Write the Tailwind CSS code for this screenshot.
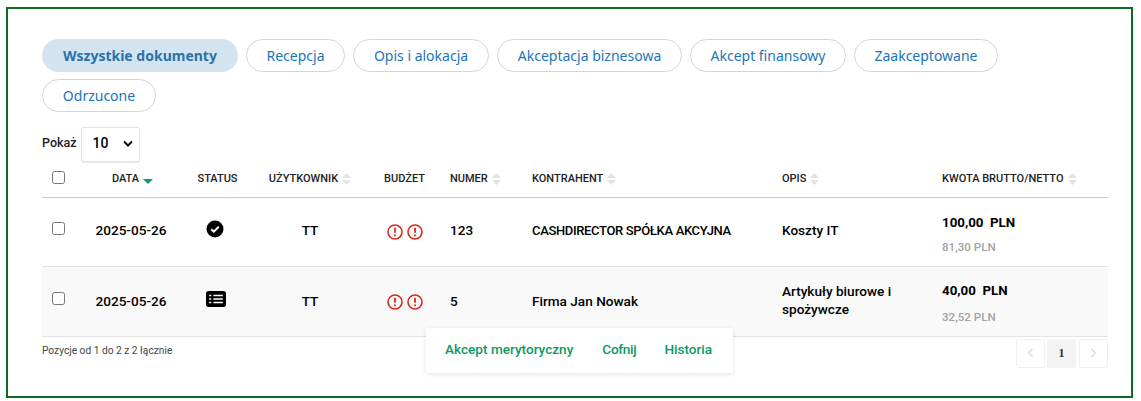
<!DOCTYPE html>
<html lang="pl">

<head>
    <meta charset="UTF-8">
    <title>Dokumenty</title>
    <script src="https://cdn.jsdelivr.net/npm/@tailwindcss/browser@4"></script>
</head>

<body class="bg-white font-['Roboto',sans-serif]">
    <div class="relative mx-[6px] mt-[7px] h-[391px] w-[1127px] border-2 border-[#0b6b23] px-[34px] pt-[30px]">
        <!-- Tabs -->
        <div class="flex flex-wrap gap-x-2 gap-y-[7px] font-['Noto_Sans',sans-serif] text-[14px] text-[#1b75bb]">
            <a class="flex h-[33px] w-[196px] items-center justify-center rounded-full bg-[#d3e4f0] font-bold text-[#2a72a8]">Wszystkie dokumenty</a>
            <a class="flex h-[33px] w-[99px] items-center justify-center rounded-full border border-[#d5d5d5]">Recepcja</a>
            <a class="flex h-[33px] w-[136px] items-center justify-center rounded-full border border-[#d5d5d5]">Opis i alokacja</a>
            <a class="flex h-[33px] w-[185px] items-center justify-center rounded-full border border-[#d5d5d5]">Akceptacja biznesowa</a>
            <a class="flex h-[33px] w-[156px] items-center justify-center rounded-full border border-[#d5d5d5]">Akcept finansowy</a>
            <a class="flex h-[33px] w-[144px] items-center justify-center rounded-full border border-[#d5d5d5]">Zaakceptowane</a>
            <a class="flex h-[33px] w-[114px] items-center justify-center rounded-full border border-[#d5d5d5]">Odrzucone</a>
        </div>

        <!-- Page size -->
        <div class="mt-[15px] flex h-[35px] items-center gap-[4px] text-[12.5px] font-medium text-[#222]">
            <span class="pb-[3px]">Pokaż</span>
            <div class="flex h-[35px] w-[59px] items-center justify-between rounded-[2px] border border-[#e3e3e3] pb-[3px] pl-[11px] pr-[6px] text-[14px] text-black shadow-[0_1px_1px_rgba(0,0,0,0.08)]">
                <span>10</span>
                <svg width="10" height="7" viewBox="0 0 10 7" fill="none" stroke="#111" stroke-width="2"><path d="M1 1.5l4 4 4-4" /></svg>
            </div>
        </div>

        <!-- Table -->
        <table class="w-[1066px] table-fixed border-collapse text-[13.6px] font-medium text-black">
            <colgroup>
                <col class="w-[44px]"><col class="w-[90px]"><col class="w-[83px]"><col class="w-[102px]"><col class="w-[79px]"><col class="w-[82px]"><col class="w-[250px]"><col class="w-[160px]"><col class="w-[176px]">
            </colgroup>
            <thead>
                <tr class="h-[35px] border-b border-[#c8c8c8] text-[11px] font-medium text-[#222]">
                    <th class="pl-[10px] text-left font-medium"><input type="checkbox" class="-mt-[4px] block h-[13px] w-[13px]"></th>
                    <th class="pl-[3px] font-medium"><span class="inline-flex items-center gap-1">DATA <svg width="10" height="12" viewBox="0 0 10 12"><path d="M0 6h10l-5 5z" fill="#0a9a63" /></svg></span></th>
                    <th class="font-medium">STATUS</th>
                    <th class="font-medium"><span class="inline-flex items-center gap-1">UŻYTKOWNIK <svg width="9" height="12" viewBox="0 0 9 12" fill="#e3e3e3"><path d="M0 5l4.5-5L9 5zM0 7l4.5 5L9 7z" /></svg></span></th>
                    <th class="pl-[8px] font-medium">BUDŻET</th>
                    <th class="pl-[10px] text-left font-medium"><span class="inline-flex items-center gap-1">NUMER <svg width="9" height="12" viewBox="0 0 9 12" fill="#e3e3e3"><path d="M0 5l4.5-5L9 5zM0 7l4.5 5L9 7z" /></svg></span></th>
                    <th class="pl-[10px] text-left font-medium"><span class="inline-flex items-center gap-1">KONTRAHENT <svg width="9" height="12" viewBox="0 0 9 12" fill="#e3e3e3"><path d="M0 5l4.5-5L9 5zM0 7l4.5 5L9 7z" /></svg></span></th>
                    <th class="pl-[10px] text-left font-medium"><span class="inline-flex items-center gap-1">OPIS <svg width="9" height="12" viewBox="0 0 9 12" fill="#e3e3e3"><path d="M0 5l4.5-5L9 5zM0 7l4.5 5L9 7z" /></svg></span></th>
                    <th class="pl-[10px] text-left font-medium"><span class="inline-flex items-center gap-1">KWOTA BRUTTO/NETTO <svg width="9" height="12" viewBox="0 0 9 12" fill="#e3e3e3"><path d="M0 5l4.5-5L9 5zM0 7l4.5 5L9 7z" /></svg></span></th>
                </tr>
            </thead>
            <tbody>
                <tr class="h-[69px] border-b border-[#e3e3e3]">
                    <td class="pl-[10px]"><input type="checkbox" class="-mt-[6px] block h-[13px] w-[13px]"></td>
                    <td class="pb-[2px] text-center">2025-05-26</td>
                    <td class="pr-[6px]">
                        <svg class="mx-auto -mt-[5px]" width="18" height="18" viewBox="0 0 18 18"><circle cx="9" cy="9" r="8.5" fill="#000" /><path d="M5.3 9.3l2.5 2.4 4.9-4.9" fill="none" stroke="#fff" stroke-width="2" /></svg>
                    </td>
                    <td class="pb-[2px] text-center">TT</td>
                    <td class="pl-[8px]">
                        <div class="flex justify-center gap-[4px] pt-[1px]">
                            <svg width="16" height="16" viewBox="0 0 16 16"><circle cx="8" cy="8" r="7" fill="none" stroke="#d9281e" stroke-width="1.6" /><path d="M8 3.8v5" stroke="#d9281e" stroke-width="1.8" /><path d="M8 10.4v1.8" stroke="#d9281e" stroke-width="1.8" /></svg>
                            <svg width="16" height="16" viewBox="0 0 16 16"><circle cx="8" cy="8" r="7" fill="none" stroke="#d9281e" stroke-width="1.6" /><path d="M8 3.8v5" stroke="#d9281e" stroke-width="1.8" /><path d="M8 10.4v1.8" stroke="#d9281e" stroke-width="1.8" /></svg>
                        </div>
                    </td>
                    <td class="pb-[2px] pl-[10px]">123</td>
                    <td class="pb-[2px] pl-[10px] text-[13px] tracking-[-0.35px]">CASHDIRECTOR SPÓŁKA AKCYJNA</td>
                    <td class="pb-[2px] pl-[10px]">Koszty IT</td>
                    <td class="pl-[10px] pt-[7px]">
                        <div class="text-[13.3px] font-bold">100,00&nbsp; PLN</div>
                        <div class="mt-[6px] text-[11.6px] text-[#a3a3a3]">81,30 PLN</div>
                    </td>
                </tr>
                <tr class="h-[70px] border-b border-[#e3e3e3] bg-[#f9f9f9]">
                    <td class="pl-[10px]"><input type="checkbox" class="-mt-[6px] block h-[13px] w-[13px]"></td>
                    <td class="text-center">2025-05-26</td>
                    <td class="pr-[4px]">
                        <svg class="mx-auto -mt-[5px]" width="20" height="16" viewBox="0 0 19 16" preserveAspectRatio="none"><rect width="19" height="16" rx="2.5" fill="#000" /><path d="M3 4.5h2M3 8h2M3 11.5h2M7 4.5h9M7 8h9M7 11.5h9" stroke="#fff" stroke-width="1.7" /></svg>
                    </td>
                    <td class="text-center">TT</td>
                    <td class="pl-[8px]">
                        <div class="flex justify-center gap-[4px] pt-[1px]">
                            <svg width="16" height="16" viewBox="0 0 16 16"><circle cx="8" cy="8" r="7" fill="none" stroke="#d9281e" stroke-width="1.6" /><path d="M8 3.8v5" stroke="#d9281e" stroke-width="1.8" /><path d="M8 10.4v1.8" stroke="#d9281e" stroke-width="1.8" /></svg>
                            <svg width="16" height="16" viewBox="0 0 16 16"><circle cx="8" cy="8" r="7" fill="none" stroke="#d9281e" stroke-width="1.6" /><path d="M8 3.8v5" stroke="#d9281e" stroke-width="1.8" /><path d="M8 10.4v1.8" stroke="#d9281e" stroke-width="1.8" /></svg>
                        </div>
                    </td>
                    <td class="pl-[10px]">5</td>
                    <td class="pl-[10px]">Firma Jan Nowak</td>
                    <td class="pb-[2px] pl-[10px] leading-[18px]">Artykuły biurowe i spożywcze</td>
                    <td class="pl-[10px] pt-[6px]">
                        <div class="text-[13.3px] font-bold">40,00&nbsp; PLN</div>
                        <div class="mt-[8px] text-[11.6px] text-[#a3a3a3]">32,52 PLN</div>
                    </td>
                </tr>
            </tbody>
        </table>

        <!-- Footer -->
        <div class="flex w-[1066px] items-start justify-between pt-[2px]">
            <div class="pt-[4px] text-[10.2px] text-[#444]">Pozycje od 1 do 2 z 2 łącznie</div>
            <div class="flex gap-[2px] text-[12px]">
                <span class="flex h-[29px] w-[29px] items-center justify-center rounded-[2px] border border-[#f0f0f0]"><svg width="7" height="10" viewBox="0 0 7 10" fill="none" stroke="#ddd" stroke-width="1.5"><path d="M5.5 1l-4 4 4 4" /></svg></span>
                <span class="flex h-[29px] w-[29px] items-center justify-center rounded-[2px] bg-[#f3f3f3] font-['Liberation_Serif',serif] font-bold text-[#333]">1</span>
                <span class="ml-px flex h-[29px] w-[29px] items-center justify-center rounded-[2px] border border-[#f0f0f0]"><svg width="7" height="10" viewBox="0 0 7 10" fill="none" stroke="#ddd" stroke-width="1.5"><path d="M1.5 1l4 4-4 4" /></svg></span>
            </div>
        </div>

        <!-- Floating actions -->
        <div class="absolute left-[418px] top-[319px] flex h-[45px] w-[307px] items-center gap-[28px] bg-white pb-[2px] pl-[19px] text-[13.6px] font-medium text-[#0a9a63] shadow-[0_1px_4px_rgba(0,0,0,0.12)]">
            <span>Akcept merytoryczny</span>
            <span class="ml-px tracking-[-0.3px]">Cofnij</span>
            <span>Historia</span>
        </div>
    </div>
</body>

</html>
